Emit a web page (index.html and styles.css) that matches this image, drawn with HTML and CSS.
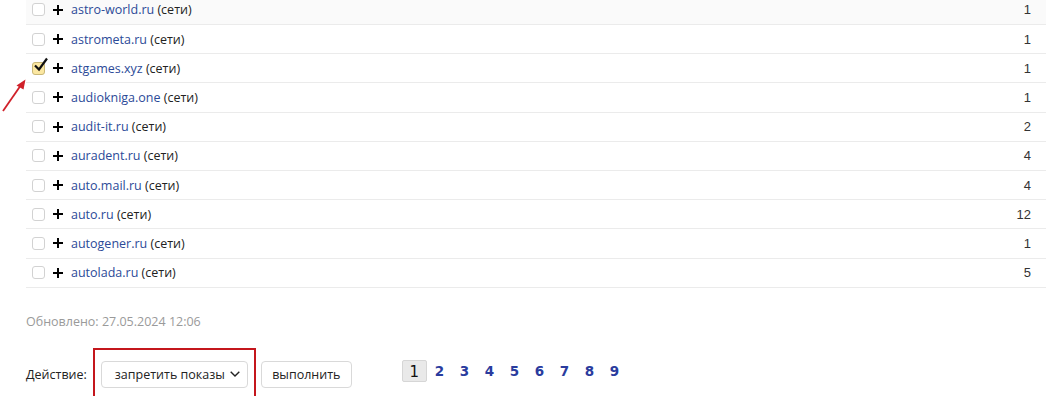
FILE: index.html
```html
<!DOCTYPE html>
<html lang="ru">
<head>
<meta charset="utf-8">
<link rel="stylesheet" href="styles.css">
</head>
<body>
<div class="page">
  <div class="table">
    <div class="row row-hover"><span class="cb"></span><span class="plus"></span><span class="name"><a href="#">astro-world.ru</a> (сети)</span><span class="num">1</span></div>
    <div class="row"><span class="cb"></span><span class="plus"></span><span class="name"><a href="#">astrometa.ru</a> (сети)</span><span class="num">1</span></div>
    <div class="row"><span class="cb cb-on"><svg class="tick" viewBox="0 0 16 16" width="16" height="16"><path d="M2 8.5 L6 12.5 L14 1.5" fill="none" stroke="#111" stroke-width="2.2" stroke-linejoin="miter"/></svg></span><span class="plus"></span><span class="name"><a href="#">atgames.xyz</a> (сети)</span><span class="num">1</span></div>
    <div class="row"><span class="cb"></span><span class="plus"></span><span class="name"><a href="#">audiokniga.one</a> (сети)</span><span class="num">1</span></div>
    <div class="row"><span class="cb"></span><span class="plus"></span><span class="name"><a href="#">audit-it.ru</a> (сети)</span><span class="num">2</span></div>
    <div class="row"><span class="cb"></span><span class="plus"></span><span class="name"><a href="#">auradent.ru</a> (сети)</span><span class="num">4</span></div>
    <div class="row"><span class="cb"></span><span class="plus"></span><span class="name"><a href="#">auto.mail.ru</a> (сети)</span><span class="num">4</span></div>
    <div class="row"><span class="cb"></span><span class="plus"></span><span class="name"><a href="#">auto.ru</a> (сети)</span><span class="num">12</span></div>
    <div class="row"><span class="cb"></span><span class="plus"></span><span class="name"><a href="#">autogener.ru</a> (сети)</span><span class="num">1</span></div>
    <div class="row"><span class="cb"></span><span class="plus"></span><span class="name"><a href="#">autolada.ru</a> (сети)</span><span class="num">5</span></div>
  </div>

  <div class="updated">Обновлено: 27.05.2024 12:06</div>

  <div class="actions">
    <span class="label">Действие:</span>
    <div class="highlight">
      <button class="select">запретить показы<svg class="chev" viewBox="0 0 10 6" width="10" height="6"><path d="M0.7 0.7 L5 5 L9.3 0.7" fill="none" stroke="#222" stroke-width="1.4"/></svg></button>
    </div>
    <button class="run">выполнить</button>
    <nav class="pager">
      <span class="page-cur">1</span>
      <a href="#">2</a><a href="#">3</a><a href="#">4</a><a href="#">5</a><a href="#">6</a><a href="#">7</a><a href="#">8</a><a href="#">9</a>
    </nav>
  </div>

  <svg class="arrow" width="34" height="36" viewBox="0 0 34 36">
    <path d="M3 34 L21 8" stroke="#d0212a" stroke-width="1.8" fill="none"/>
    <path d="M25.5 2.5 L16.5 8.5 L23.5 12.5 Z" fill="#d0212a"/>
  </svg>
</div>
</body>
</html>
```

FILE: styles.css
```css
* { box-sizing: border-box; }
html, body { margin: 0; padding: 0; background: #fff; }
body {
  font-family: "Open Sans", "Noto Sans", Arial, sans-serif;
  font-size: 13px;
  color: #222;
  overflow: hidden;
}
.page {
  position: relative;
  width: 1051px;
  height: 400px;
  padding-left: 26px;
}
.table {
  width: 1020px;
  margin-top: -4.2px;
}
.row {
  display: flex;
  align-items: center;
  height: 29.2px;
  border-bottom: 1px solid #ebebeb;
  padding-left: 6px;
  padding-right: 15px;
}
.row-hover { background: #fafafa; }
.cb {
  position: relative;
  flex: none;
  width: 13px;
  height: 13px;
  border: 1px solid #d2d2d2;
  border-radius: 3px;
  background: #fff;
}
.cb-on {
  background: #fbe7a1;
  border-color: #c9b777;
}
.tick {
  position: absolute;
  left: 0px;
  top: -6px;
}
.plus {
  position: relative;
  flex: none;
  width: 10px;
  height: 10px;
  margin-left: 8px;
  margin-right: 8px;
}
.plus::before, .plus::after {
  content: "";
  position: absolute;
  background: #000;
}
.plus::before { left: 0; right: 0; top: 4px; height: 2px; }
.plus::after { top: 0; bottom: 0; left: 4px; width: 2px; }
.name {
  flex: 1;
  white-space: nowrap;
  font-size: 12.5px;
  color: #222;
}
.name a { color: #2c4a98; text-decoration: none; }
.num {
  font-family: "Liberation Sans", Arial, sans-serif;
  font-size: 13px;
  color: #333;
}
.updated {
  margin-top: 25px;
  color: #9a9a9a;
  font-size: 12.5px;
  line-height: 18px;
}
.actions {
  display: flex;
  align-items: flex-start;
  margin-top: 17px;
}
.label {
  margin-top: 13px;
  line-height: 27px;
  font-size: 12.5px;
  color: #222;
}
.highlight {
  margin-left: 6px;
  border: 2px solid #c4161c;
  padding: 11px 6px 20px 6px;
}
button {
  font-family: inherit;
  font-size: 12.5px;
  color: #222;
  background: #fff;
  border: 1px solid #d9d9d9;
  border-radius: 4px;
  height: 27px;
  cursor: pointer;
}
.select {
  display: flex;
  align-items: center;
  width: 147px;
  padding: 0 0 0 13px;
}
.chev { margin-left: 5px; }
.run {
  margin-left: 5px;
  margin-top: 13px;
  width: 91px;
  padding: 0;
}
.pager {
  display: flex;
  align-items: center;
  margin-left: 50px;
  margin-top: 12px;
  height: 22px;
  font-family: "DejaVu Sans", Verdana, sans-serif;
  font-weight: bold;
  font-size: 13.5px;
}
.page-cur {
  width: 25px;
  height: 22px;
  line-height: 22px;
  text-align: center;
  background: #e9e9e9;
  border: 1px solid #d6d6d6;
  border-radius: 2px;
  color: #111;
  font-weight: normal;
  font-size: 15px;
}
.pager a {
  color: #2a3c9e;
  text-decoration: none;
  width: 25px;
  text-align: center;
}
.arrow {
  position: absolute;
  left: 0;
  top: 81px;
}
```
